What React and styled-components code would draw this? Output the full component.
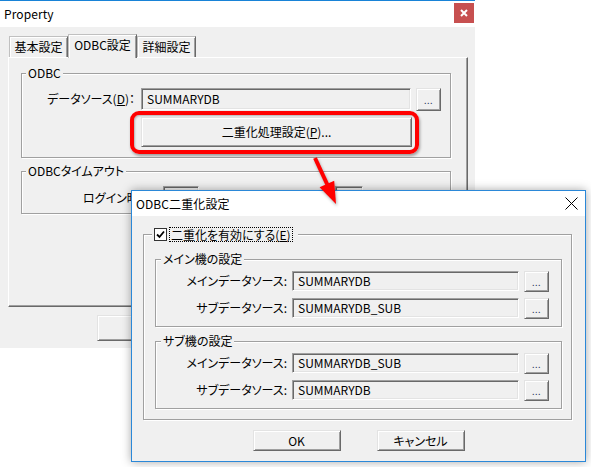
import React from "react";
import styled, { createGlobalStyle } from "styled-components";

const GlobalStyle = createGlobalStyle`
	html, body {
		margin: 0;
		padding: 0;
		background: #fff;
	}
	body {
		font-family: "Noto Sans CJK JP", "Noto Sans", sans-serif;
		font-size: 12px;
		color: #000;
		font-feature-settings: "palt";
	}
	* {
		box-sizing: border-box;
	}
`;

const Desktop = styled.div`
	position: relative;
	width: 591px;
	height: 467px;
	overflow: hidden;
	background: #fff;
`;

const PropertyWindow = styled.div`
	position: absolute;
	left: 0;
	top: 0;
	width: 475px;
	height: 348px;
	background: #f0f0f0;
	border-top: 1px solid #1883d7;
	display: flex;
	flex-direction: column;
`;

const DialogWindow = styled.div`
	position: absolute;
	left: 131px;
	top: 190px;
	width: 455px;
	height: 272px;
	background: #f0f0f0;
	border: 1px solid #2b88d8;
	box-shadow: 0 0 9px rgba(0, 0, 0, 0.35);
	display: flex;
	flex-direction: column;
	z-index: 3;
`;

const TitleBar = styled.div`
	height: ${(p) => p.$h}px;
	flex: none;
	background: #fff;
	display: flex;
	align-items: ${(p) => (p.$top ? "flex-start" : "center")};
	justify-content: space-between;
	padding-left: 4px;
`;

const TitleText = styled.span`
	line-height: ${(p) => p.$h}px;
	font-size: 12px;
	letter-spacing: 0.1px;
`;

const RedClose = styled.div`
	width: 20px;
	height: 20px;
	margin: 2px 1px 0 0;
	background: #c75050;
	display: flex;
	align-items: center;
	justify-content: center;
`;

const PlainClose = styled.div`
	width: 14px;
	height: 14px;
	margin-right: 7px;
	display: flex;
	align-items: center;
	justify-content: center;
`;

const PropertyBody = styled.div`
	padding: 7px 7px 0 8px;
	display: flex;
	flex-direction: column;
`;

const TabRow = styled.div`
	display: flex;
	align-items: flex-end;
	height: 23px;
	padding-left: 1px;
	position: relative;
	z-index: 1;
`;

const Tab = styled.div`
	width: ${(p) => p.$w}px;
	height: ${(p) => (p.$active ? 24 : 21)}px;
	margin-bottom: ${(p) => (p.$active ? -1 : 0)}px;
	padding-bottom: ${(p) => (p.$active ? 3 : 0)}px;
	display: flex;
	align-items: center;
	justify-content: center;
	background: #f0f0f0;
	border: 1px solid #c0c0c0;
	border-bottom: none;
	border-right-color: #696969;
	box-shadow: inset 1px 1px 0 #fff, inset -1px 0 0 #a0a0a0;
	font-size: 12px;
	line-height: 14px;
	white-space: nowrap;
`;

const TabPanel = styled.div`
	width: 460px;
	height: 250px;
	border: 1px solid;
	border-color: #fff #696969 #696969 #fff;
	box-shadow: inset -1px -1px 0 #a0a0a0;
	padding: 15px 0 0 12px;
	display: flex;
	flex-direction: column;
`;

const GroupBox = styled.div`
	width: ${(p) => p.$w}px;
	margin: ${(p) => p.$mt || 0}px 0 0 ${(p) => p.$ml || 0}px;
	border: 1px solid #a0a0a0;
	box-shadow: inset 1px 1px 0 #fff, 1px 1px 0 #fff;
	padding-bottom: ${(p) => p.$pb || 0}px;
	display: flex;
	flex-direction: column;
`;

const GroupTitle = styled.div`
	align-self: flex-start;
	margin: -8px 0 0 ${(p) => p.$ml}px;
	padding: 0 ${(p) => p.$padr || 2}px 0 2px;
	background: #f0f0f0;
	line-height: 14px;
	height: 14px;
	display: flex;
	align-items: center;
	white-space: nowrap;
`;

const FieldGrid = styled.div`
	display: grid;
	grid-template-columns: ${(p) => p.$cols};
	column-gap: 5px;
	row-gap: ${(p) => p.$rg}px;
	margin-top: ${(p) => p.$mt}px;
	align-items: start;
`;

const FieldLabel = styled.div`
	text-align: right;
	white-space: nowrap;
	line-height: ${(p) => p.$h}px;
	padding-right: ${(p) => p.$pr || 0}px;
`;

const TextBox = styled.div`
	height: ${(p) => p.$h}px;
	width: ${(p) => p.$w || "auto"};
	flex: none;
	border: 1px solid;
	border-color: #a0a0a0 #fff #fff #a0a0a0;
	box-shadow: inset 1px 1px 0 #696969, inset -1px -1px 0 #e3e3e3;
	background: #f0f0f0;
	padding-left: 5px;
	line-height: ${(p) => p.$h - 2}px;
	font-size: 12px;
	white-space: nowrap;
	overflow: hidden;
`;

const PushButton = styled.div`
	width: ${(p) => p.$w}px;
	height: ${(p) => p.$h}px;
	border: 1px solid;
	border-color: #e3e3e3 #696969 #696969 #e3e3e3;
	box-shadow: inset 1px 1px 0 #fff, inset -1px -1px 0 #a0a0a0;
	background: #f0f0f0;
	display: flex;
	align-items: center;
	justify-content: center;
	font-size: 12px;
	line-height: 14px;
	white-space: nowrap;
	flex: none;
`;

const Dots = styled.span`
	font-size: 9px;
	letter-spacing: 0.5px;
	margin-top: 3px;
	color: #303a60;
`;

const TimeoutRow = styled.div`
	display: flex;
	align-items: center;
	margin: 8px 0 5px 61px;
	white-space: nowrap;
`;

const TimeoutLabel = styled.div`
	width: 80px;
	flex: none;
`;

const Gap = styled.div`
	width: ${(p) => p.$w}px;
	flex: none;
`;

const BottomButtons = styled.div`
	display: flex;
	gap: ${(p) => p.$gap}px;
	margin: ${(p) => p.$mt}px 0 0 ${(p) => p.$ml || 0}px;
	padding-left: ${(p) => p.$pl || 0}px;
	justify-content: ${(p) => (p.$center ? "center" : "flex-start")};
`;

const DialogBody = styled.div`
	padding-top: 18px;
	display: flex;
	flex-direction: column;
	align-items: center;
`;

const CheckBox = styled.div`
	width: 13px;
	height: 13px;
	border: 1px solid #333;
	background: #fff;
	display: flex;
	align-items: center;
	justify-content: center;
	margin-right: 3px;
	flex: none;
`;

const FocusLabel = styled.span`
	outline: 1px dotted #000;
	outline-offset: 0;
	padding: 0 1px;
	line-height: 13px;
`;

const Highlight = styled.div`
	position: absolute;
	left: 130px;
	top: 111px;
	width: 289px;
	height: 43px;
	border: 4px solid #ff0000;
	border-radius: 9px;
	box-shadow: 1px 2px 3px rgba(0, 0, 0, 0.35), inset 1px 1px 2px rgba(0, 0, 0, 0.25);
	z-index: 2;
`;

const Arrow = styled.svg`
	position: absolute;
	left: 305px;
	top: 150px;
	width: 40px;
	height: 62px;
	z-index: 4;
	filter: drop-shadow(1px 2px 1.5px rgba(0, 0, 0, 0.3));
`;

const DialogRows = ({ main, sub }) => (
	<FieldGrid $cols="131px 227px 25px" $rg={6} $mt={5}>
		<FieldLabel $h={20}>メインデータソース:</FieldLabel>
		<TextBox $h={20}>{main}</TextBox>
		<PushButton $w={25} $h={21}>
			<Dots>...</Dots>
		</PushButton>
		<FieldLabel $h={20}>サブデータソース:</FieldLabel>
		<TextBox $h={20}>{sub}</TextBox>
		<PushButton $w={25} $h={21}>
			<Dots>...</Dots>
		</PushButton>
	</FieldGrid>
);

const App = () => {
	return (
		<>
			<GlobalStyle />
			<Desktop>
				<PropertyWindow>
					<TitleBar $h={26} $top>
						<TitleText $h={25}>Property</TitleText>
						<RedClose>
							<svg width="8" height="8" viewBox="0 0 8 8">
								<path d="M1 1L7 7M7 1L1 7" stroke="#fff" strokeWidth="2" />
							</svg>
						</RedClose>
					</TitleBar>
					<PropertyBody>
						<TabRow>
							<Tab $w={59}>基本設定</Tab>
							<Tab $w={69} $active>ODBC設定</Tab>
							<Tab $w={59}>詳細設定</Tab>
						</TabRow>
						<TabPanel>
							<GroupBox $w={430} $pb={10}>
								<GroupTitle $ml={4}>ODBC</GroupTitle>
								<FieldGrid $cols="114px 270px 25px" $rg={6} $mt={8}>
									<FieldLabel $h={22} $pr={1}>
										データソース(<u>D</u>)：
									</FieldLabel>
									<TextBox $h={22}>SUMMARYDB</TextBox>
									<PushButton $w={25} $h={23}>
										<Dots>...</Dots>
									</PushButton>
									<span />
									<PushButton $w={271} $h={30}>
										二重化処理設定(<u>P</u>)...
									</PushButton>
								</FieldGrid>
							</GroupBox>
							<GroupBox $w={430} $mt={13}>
								<GroupTitle $ml={4}>ODBCタイムアウト</GroupTitle>
								<TimeoutRow>
									<TimeoutLabel>ログイン時間(T):</TimeoutLabel>
									<TextBox $h={22} $w="36px" />
									<Gap $w={136} />
									<TextBox $h={22} $w="28px" />
								</TimeoutRow>
							</GroupBox>
						</TabPanel>
						<BottomButtons $gap={8} $mt={8} $pl={89}>
							<PushButton $w={88} $h={26}>OK</PushButton>
							<PushButton $w={88} $h={26}>キャンセル</PushButton>
							<PushButton $w={88} $h={26}>適用(A)</PushButton>
						</BottomButtons>
					</PropertyBody>
				</PropertyWindow>

				<Highlight />

				<DialogWindow>
					<TitleBar $h={25}>
						<TitleText $h={25}>ODBC二重化設定</TitleText>
						<PlainClose>
							<svg width="13" height="13" viewBox="0 0 13 13">
								<path d="M0.5 0.5L12.5 12.5M12.5 0.5L0.5 12.5" stroke="#000" strokeWidth="1" />
							</svg>
						</PlainClose>
					</TitleBar>
					<DialogBody>
						<GroupBox $w={429} $ml={-2} $pb={10}>
							<GroupTitle $ml={8} $padr={6}>
								<CheckBox>
									<svg width="9" height="9" viewBox="0 0 9 9">
										<path d="M1 4.5L3.5 7L8 1.5" stroke="#000" strokeWidth="1.8" fill="none" />
									</svg>
								</CheckBox>
								<FocusLabel>
									二重化を有効にする(<u>E</u>)
								</FocusLabel>
							</GroupTitle>
							<GroupBox $w={407} $mt={18} $ml={11} $pb={7}>
								<GroupTitle $ml={5}>メイン機の設定</GroupTitle>
								<DialogRows main="SUMMARYDB" sub="SUMMARYDB_SUB" />
							</GroupBox>
							<GroupBox $w={407} $mt={14} $ml={11} $pb={7}>
								<GroupTitle $ml={5}>サブ機の設定</GroupTitle>
								<DialogRows main="SUMMARYDB_SUB" sub="SUMMARYDB" />
							</GroupBox>
						</GroupBox>
						<BottomButtons $gap={36} $mt={10} $center>
							<PushButton $w={88} $h={21}>OK</PushButton>
							<PushButton $w={88} $h={21}>キャンセル</PushButton>
						</BottomButtons>
					</DialogBody>
				</DialogWindow>

				<Arrow viewBox="0 0 40 62">
					<line x1="10" y1="8" x2="22.5" y2="35" stroke="#ff0000" strokeWidth="4" />
					<polygon points="14.6,37.3 29.2,30.7 31,54" fill="#ff0000" />
				</Arrow>
			</Desktop>
		</>
	);
};

export default App;
